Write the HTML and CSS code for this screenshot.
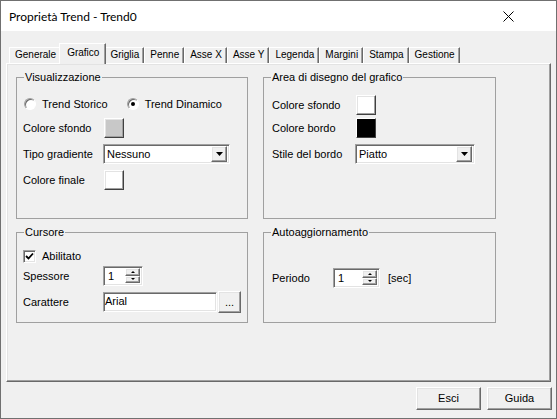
FILE: index.html
```html
<!DOCTYPE html>
<html lang="it">
<head>
<meta charset="utf-8">
<title>Proprietà Trend - Trend0</title>
<link rel="stylesheet" href="styles.css">
</head>
<body>
<div class="window">
  <div class="titlebar">
    <span class="title">Proprietà Trend - Trend0</span>
    <svg class="close" width="11" height="11" viewBox="0 0 11 11"><path d="M0.5 0.5 L10.5 10.5 M10.5 0.5 L0.5 10.5" stroke="#000" stroke-width="1" fill="none"/></svg>
  </div>
  <div class="client">
    <div class="tabs">
      <div class="tab">Generale</div>
      <div class="tab active">Grafico</div>
      <div class="tab">Griglia</div>
      <div class="tab">Penne</div>
      <div class="tab">Asse X</div>
      <div class="tab">Asse Y</div>
      <div class="tab">Legenda</div>
      <div class="tab">Margini</div>
      <div class="tab">Stampa</div>
      <div class="tab">Gestione</div>
    </div>
    <div class="panel">
      <fieldset class="group">
        <legend>Visualizzazione</legend>
        <div class="vis-body">
          <div class="radios">
            <span class="radio-item"><span class="radio"></span>Trend Storico</span>
            <span class="radio-item"><span class="radio"><span class="dot"></span></span>Trend Dinamico</span>
          </div>
          <div class="form vis-form">
            <span class="lbl">Colore sfondo</span><span class="swatch grey"></span>
            <span class="lbl">Tipo gradiente</span>
            <div class="combo w127"><span class="combo-text">Nessuno</span><span class="combo-btn"><svg width="7" height="4" viewBox="0 0 7 4"><polygon points="0,0 7,0 3.5,4" fill="#000"/></svg></span></div>
            <span class="lbl">Colore finale</span><span class="swatch white"></span>
          </div>
        </div>
      </fieldset>
      <fieldset class="group">
        <legend>Area di disegno del grafico</legend>
        <div class="form area-body">
          <span class="lbl">Colore sfondo</span><span class="swatch white"></span>
          <span class="lbl">Colore bordo</span><span class="swatch black"></span>
          <span class="lbl r3">Stile del bordo</span>
          <div class="combo w120 r3"><span class="combo-text">Piatto</span><span class="combo-btn"><svg width="7" height="4" viewBox="0 0 7 4"><polygon points="0,0 7,0 3.5,4" fill="#000"/></svg></span></div>
        </div>
      </fieldset>
      <fieldset class="group">
        <legend>Cursore</legend>
        <div class="cur-body">
          <div class="check-row">
            <span class="checkbox"><svg width="9" height="9" viewBox="0 0 9 9"><polyline points="1,4 3.5,6.5 8,1.5" fill="none" stroke="#000" stroke-width="1.8"/></svg></span>Abilitato
          </div>
          <div class="form cur-form">
            <span class="lbl">Spessore</span>
            <div class="spin w40"><span class="spin-val">1</span><span class="spin-btns"><span class="sb"><span class="up"></span></span><span class="sb"><span class="down"></span></span></span></div>
            <span class="lbl">Carattere</span>
            <div class="font-row"><span class="field">Arial</span><button class="btn dots">...</button></div>
          </div>
        </div>
      </fieldset>
      <fieldset class="group">
        <legend>Autoaggiornamento</legend>
        <div class="auto-body">
          <span class="lbl auto-lbl">Periodo</span>
          <div class="spin w47"><span class="spin-val">1</span><span class="spin-btns"><span class="sb"><span class="up"></span></span><span class="sb"><span class="down"></span></span></span></div>
          <span class="unit">[sec]</span>
        </div>
      </fieldset>
    </div>
    <div class="footer">
      <button class="btn action">Esci</button>
      <button class="btn action">Guida</button>
    </div>
  </div>
</div>
</body>
</html>
```
FILE: styles.css
```css
* { box-sizing: border-box; }
html, body { margin: 0; padding: 0; }
body {
  width: 557px; height: 419px; overflow: hidden;
  background: #f0f0f0; color: #000;
  font-family: "Liberation Sans", Arial, sans-serif;
  font-size: 11px; line-height: 13px;
}
.window {
  width: 557px; height: 419px;
  border: 1px solid #707070;
  display: flex; flex-direction: column;
  background: #f0f0f0;
}
.titlebar {
  height: 30px; flex: none; background: #fff;
  display: flex; align-items: center; justify-content: space-between;
  padding: 0 42px 0 8px;
}
.title { font-family: Lato, "Liberation Sans", sans-serif; font-size: 12px; }
.close { display: block; }
.client { flex: 1; padding-top: 12px; }

.tabs { display: flex; align-items: flex-end; margin-left: 8px; height: 20px; }
.tab {
  position: relative;
  height: 16px; padding: 0 4px 0 5px;
  font-size: 10px; line-height: 13px; white-space: nowrap;
  border-top: 1px solid #fff; border-left: 1px solid #fff; border-right: 1px solid #696969;
  box-shadow: inset -1px 0 #a0a0a0;
  background: #f0f0f0;
}
.tab.active { height: 21px; margin: 0 -2px -1px; padding: 2px 6px 0 7px; z-index: 1; }

.panel {
  margin-left: 5px; width: 545px; height: 319px;
  border: 1px solid; border-color: #fff #696969 #696969 #fff;
  box-shadow: inset -1px -1px #a0a0a0, inset 1px 1px #e3e3e3;
  padding: 7px 0 0 9px;
  display: grid; grid-template-columns: 232px 233px; grid-template-rows: 148px 97px;
  column-gap: 15px; row-gap: 7px; align-content: start;
}
.group { margin: 0; padding: 0; border: 1px solid #a0a0a0; min-width: 0; }
.group legend { margin-left: 7px; padding: 0 1px; line-height: 13px; }

.swatch, .combo-btn, .sb, .btn {
  border: 1px solid; border-color: #fff #696969 #696969 #fff;
  box-shadow: inset -1px -1px #a0a0a0, inset 1px 1px #e3e3e3;
}
.combo, .spin, .field, .checkbox {
  background: #fff;
  border: 1px solid; border-color: #a0a0a0 #fff #fff #a0a0a0;
  box-shadow: inset 1px 1px #696969, inset -1px -1px #e3e3e3;
}

.form { display: grid; align-items: center; }
.lbl { white-space: nowrap; }

.vis-body { padding: 12px 0 0 6px; }
.radios { display: flex; gap: 19px; height: 16px; align-items: center; margin-left: 1px; }
.radio-item { display: flex; align-items: center; gap: 6px; }
.radio {
  width: 12px; height: 12px; border-radius: 50%; background: #fff;
  border: 1px solid; border-color: #a0a0a0 #fff #fff #a0a0a0;
  box-shadow: inset 1px 1px #696969;
  display: flex; align-items: center; justify-content: center;
}
.dot { width: 4px; height: 4px; border-radius: 50%; background: #000; }
.vis-form { grid-template-columns: 80px auto; row-gap: 6px; margin-top: 6px; }

.swatch { width: 20px; height: 20px; margin-left: 1px; border-color: #fff #404040 #404040 #fff; }
.swatch.grey { background: #c8c8c8; }
.swatch.white { background: #fff; }
.swatch.black { background: #000; box-shadow: none; }

.combo { height: 20px; display: flex; align-items: center; justify-content: space-between; padding: 2px; }
.w127 { width: 127px; }
.w120 { width: 120px; }
.combo-text { padding-left: 1px; }
.combo-btn { width: 16px; height: 16px; background: #f0f0f0; display: flex; align-items: center; justify-content: center; }
.combo-btn svg { display: block; }

.area-body { padding: 11px 0 0 8px; grid-template-columns: 83px auto; row-gap: 3px; }
.r3 { margin-top: 3px; }

.cur-body { padding: 10px 0 0 6px; }
.check-row { display: flex; align-items: center; gap: 6px; height: 14px; }
.checkbox { width: 13px; height: 13px; display: flex; align-items: center; justify-content: center; }
.checkbox svg { display: block; }
.cur-form { grid-template-columns: 80px auto; row-gap: 5px; margin-top: 3px; }

.spin { height: 20px; display: flex; padding: 1px 2px 2px 2px; }
.w40 { width: 40px; }
.w47 { width: 47px; }
.spin-val { flex: 1; padding-left: 2px; line-height: 16px; }
.spin-btns { width: 15px; display: flex; flex-direction: column; }
.sb { flex: 1; background: #f0f0f0; display: flex; align-items: center; justify-content: center; }
.up { width: 0; height: 0; border-left: 2px solid transparent; border-right: 2px solid transparent; border-bottom: 2px solid #000; }
.down { width: 0; height: 0; border-left: 2px solid transparent; border-right: 2px solid transparent; border-top: 2px solid #000; }

.font-row { display: flex; align-items: center; gap: 1px; }
.field { width: 114px; height: 20px; line-height: 16px; padding-left: 1px; }
.btn { font: inherit; color: #000; background: #f0f0f0; padding: 0; }
.dots { width: 23px; height: 22px; line-height: 16px; }

.auto-body { padding: 29px 0 0 8px; display: flex; align-items: center; }
.auto-lbl { width: 61px; }
.unit { margin-left: 8px; }

.footer { display: flex; justify-content: flex-end; gap: 6px; padding: 5px 4px 0 0; }
.action { width: 65px; height: 23px; }
```
